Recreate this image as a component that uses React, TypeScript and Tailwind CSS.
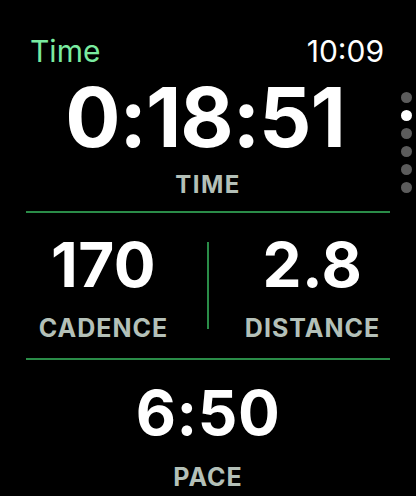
export default function App() {
  const font = { fontFamily: 'Inter, "Liberation Sans", sans-serif' }
  return (
    <div className="w-[416px] h-[496px] bg-black text-white overflow-hidden relative" style={font}>
      <div className="flex justify-between items-baseline pl-[30px] pr-[32px] pt-[36px]">
        <span className="text-[30px] leading-none text-[#7aeba0]">Time</span>
        <span className="text-[30px] leading-none text-white">10:09</span>
      </div>

      <div className="flex flex-col items-center">
        <div className="text-[82px] leading-none font-bold tracking-[-1px] mt-[11px] pr-[6px]">0:18:51</div>
        <div className="text-[24px] leading-none font-bold tracking-[1.5px] text-[#b4c0b8] mt-[14px]">TIME</div>
      </div>

      <div className="mx-[26px] h-[2px] bg-[#2a8c48] mt-[14px]" />

      <div className="flex h-[145px]">
        <div className="flex-1 flex flex-col items-center pt-[21px]">
          <div className="text-[62px] leading-none font-bold tracking-[0.5px]">170</div>
          <div className="text-[25px] leading-none font-bold tracking-[1px] text-[#b4c0b8] mt-[20px]">CADENCE</div>
        </div>
        <div className="w-[2px] bg-[#2a8c48] my-[29px]" />
        <div className="flex-1 flex flex-col items-center pt-[21px]">
          <div className="text-[62px] leading-none font-bold tracking-[0.5px]">2.8</div>
          <div className="text-[25px] leading-none font-bold tracking-[1px] text-[#b4c0b8] mt-[20px]">DISTANCE</div>
        </div>
      </div>

      <div className="mx-[26px] h-[2px] bg-[#2a8c48]" />

      <div className="flex flex-col items-center pt-[22px]">
        <div className="text-[62px] leading-none font-bold tracking-[0.5px]">6:50</div>
        <div className="text-[25px] leading-none font-bold tracking-[1px] text-[#b4c0b8] mt-[21px]">PACE</div>
      </div>

      <div className="absolute right-[4px] top-[92px] flex flex-col gap-[7px]">
        <span className="w-[11px] h-[11px] rounded-full bg-[#5c5c5c]" />
        <span className="w-[11px] h-[11px] rounded-full bg-white" />
        <span className="w-[11px] h-[11px] rounded-full bg-[#5c5c5c]" />
        <span className="w-[11px] h-[11px] rounded-full bg-[#5c5c5c]" />
        <span className="w-[11px] h-[11px] rounded-full bg-[#5c5c5c]" />
        <span className="w-[11px] h-[11px] rounded-full bg-[#5c5c5c]" />
      </div>
    </div>
  )
}
